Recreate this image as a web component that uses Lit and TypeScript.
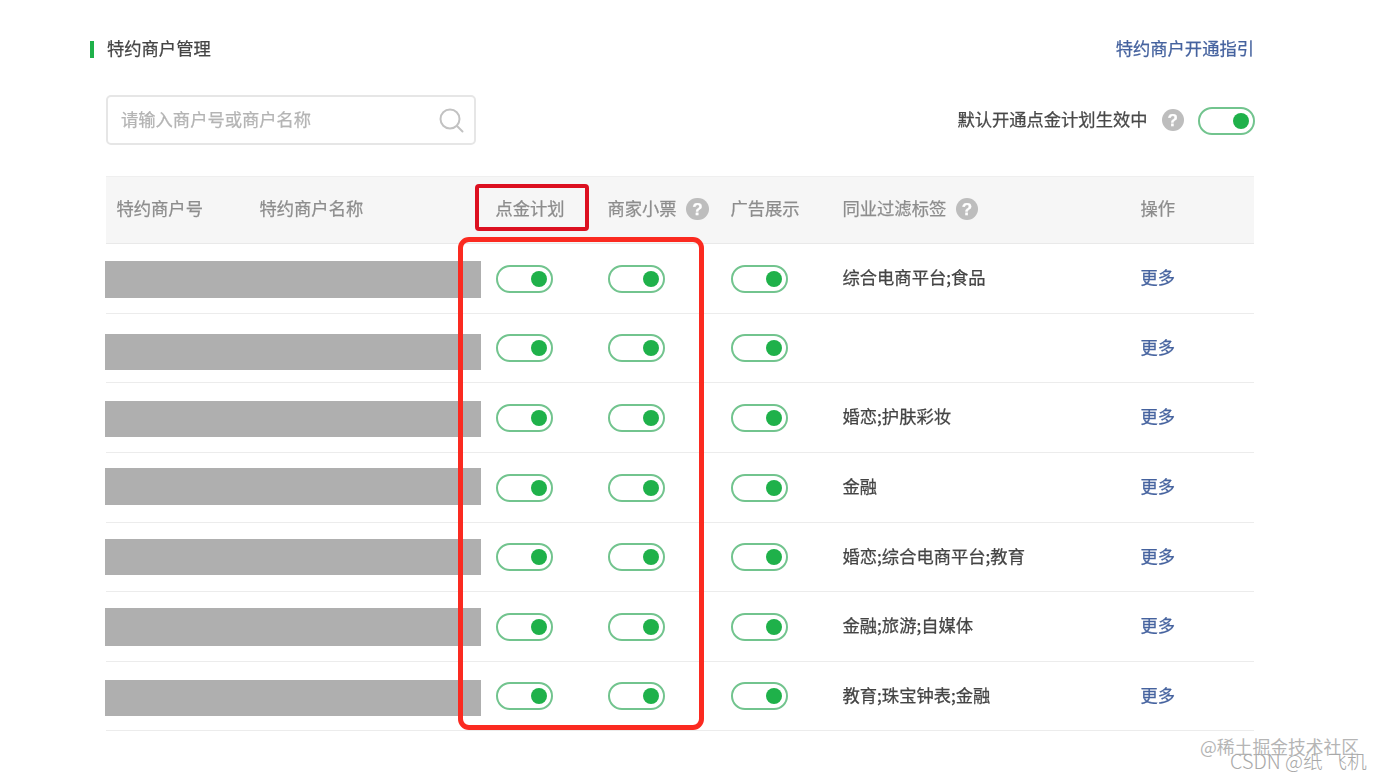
import { LitElement, html, css } from "lit";
import { customElement } from "lit/decorators.js";

const rows = [
  { tags: "综合电商平台;食品", h: 70, bar: [17, 37] },
  { tags: "", h: 69, bar: [20, 36] },
  { tags: "婚恋;护肤彩妆", h: 70, bar: [18, 36] },
  { tags: "金融", h: 70, bar: [15, 37] },
  { tags: "婚恋;综合电商平台;教育", h: 69, bar: [16, 36] },
  { tags: "金融;旅游;自媒体", h: 70, bar: [16, 38] },
  { tags: "教育;珠宝钟表;金融", h: 69, bar: [18, 36] },
];

@customElement("app-root")
export class AppRoot extends LitElement {
  static styles = css`
    :host {
      display: block;
      position: relative;
      width: 1382px;
      height: 780px;
      overflow: hidden;
      background: #fff;
      font-family: "Noto Sans CJK SC", "Noto Sans", sans-serif;
      font-size: 17.3px;
      color: #444;
    }
    .page {
      display: flex;
      flex-direction: column;
      padding: 36px 128px 0 90px;
      filter: blur(0.6px);
      -webkit-text-stroke: 0.25px currentColor;
    }
    .t { display: block; padding-bottom: 4px; }
    .title-row {
      display: flex;
      justify-content: space-between;
      align-items: center;
      height: 26px;
    }
    .title {
      display: flex;
      align-items: center;
      gap: 13px;
      color: #444;
    }
    .mark { width: 4px; height: 17px; background: #1fb14a; }
    a.link { color: #46639f; text-decoration: none; }
    .tools {
      display: flex;
      justify-content: space-between;
      align-items: center;
      margin: 33px 0 0 16px;
      height: 50px;
    }
    .search {
      box-sizing: border-box;
      width: 370px;
      height: 50px;
      border: 2px solid #e6e6e6;
      border-radius: 5px;
      display: flex;
      align-items: center;
      justify-content: space-between;
      padding: 0 10px 0 13px;
      color: #b4b4b4;
    }
    .default { display: flex; align-items: center; margin-right: -1px; }
    .default .label { margin-right: 14px; color: #484848; }
    .default .help { margin-right: 14px; }
    .default .toggle { margin-top: 2px; }
    .help {
      display: inline-flex;
      align-items: center;
      justify-content: center;
      flex: none;
      width: 22.5px;
      height: 22.5px;
      border-radius: 50%;
      background: #bdbdbd;
      color: #fff;
      font-size: 17px;
      font-weight: 700;
      line-height: 1;
      font-family: "Liberation Sans", sans-serif;
    }
    .table { margin: 31px 0 0 16px; }
    .grid {
      display: grid;
      grid-template-columns: 143px 236px 112px 123px 112px 298px 124px;
      align-items: center;
    }
    .head {
      height: 68px;
      background: #f6f6f6;
      border-top: 1px solid #efefef;
      border-bottom: 1px solid #e9e9e9;
      box-sizing: border-box;
      color: #8d8d8d;
    }
    .head .t { padding-bottom: 6px; }
    .head .help { margin-bottom: 2px; }
    .row {
      position: relative;
      box-sizing: border-box;
      border-bottom: 1px solid #ececec;
    }
    .cell { padding-left: 10.5px; display: flex; align-items: center; gap: 9.5px; white-space: nowrap; }
    .row .more { color: #46639f; }
    .toggle {
      box-sizing: border-box;
      position: relative;
      display: block;
      width: 57px;
      height: 28px;
      border: 2px solid #72c48e;
      border-radius: 14px;
      background: #fff;
    }
    .toggle::after {
      content: "";
      position: absolute;
      right: 4px;
      top: 4px;
      width: 16px;
      height: 16px;
      border-radius: 50%;
      background: #1fb14a;
    }
    .bar {
      position: absolute;
      left: -1px;
      width: 376px;
      background: #afafaf;
    }
    .box { position: absolute; box-sizing: border-box; }
    .box-head {
      left: 475px;
      top: 184px;
      width: 114px;
      height: 47px;
      border: 4px solid #dc1020;
      border-radius: 4px;
    }
    .box-body {
      left: 458px;
      top: 237px;
      width: 246px;
      height: 493px;
      border: 5px solid #fb2a20;
      border-radius: 11px;
    }
    .wm { position: absolute; white-space: nowrap; }
    .wm1 { left: 1200px; top: 734px; font-size: 17.8px; color: #b5b5b5; line-height: 24px; }
    .wm2 {
      left: 1230px;
      top: 749px;
      font-size: 19.8px;
      line-height: 24px;
      color: #a8a8a8;
      font-weight: 300;
      font-family: "Noto Sans CJK SC", sans-serif;
    }
  `;

  private toggle() {
    return html`<span class="toggle"></span>`;
  }

  render() {
    return html`
      <div class="page">
        <div class="title-row">
          <div class="title"><span class="mark"></span><span class="t">特约商户管理</span></div>
          <a class="link t">特约商户开通指引</a>
        </div>
        <div class="tools">
          <div class="search">
            <span class="t">请输入商户号或商户名称</span>
            <svg width="26" height="26" viewBox="0 0 26 26" fill="none" stroke="#c2c2c2" stroke-width="2">
              <circle cx="12" cy="12" r="9.5"></circle>
              <path d="M19 19l5.5 5.5" stroke-linecap="round"></path>
            </svg>
          </div>
          <div class="default">
            <span class="label t">默认开通点金计划生效中</span>
            <span class="help">?</span>
            ${this.toggle()}
          </div>
        </div>
        <div class="table">
          <div class="grid head">
            <div class="cell"><span class="t">特约商户号</span></div>
            <div class="cell"><span class="t">特约商户名称</span></div>
            <div class="cell"><span class="t">点金计划</span></div>
            <div class="cell"><span class="t">商家小票</span><span class="help">?</span></div>
            <div class="cell"><span class="t">广告展示</span></div>
            <div class="cell"><span class="t">同业过滤标签</span><span class="help">?</span></div>
            <div class="cell"><span class="t">操作</span></div>
          </div>
          ${rows.map(
            (r) => html`
              <div class="grid row" style="height:${r.h}px">
                <div class="bar" style="top:${r.bar[0]}px;height:${r.bar[1]}px"></div>
                <div class="cell"></div>
                <div class="cell"></div>
                <div class="cell">${this.toggle()}</div>
                <div class="cell">${this.toggle()}</div>
                <div class="cell">${this.toggle()}</div>
                <div class="cell"><span class="t">${r.tags}</span></div>
                <div class="cell more"><span class="t">更多</span></div>
              </div>
            `
          )}
        </div>
      </div>
      <div class="box box-head"></div>
      <div class="box box-body"></div>
      <div class="wm wm1">@稀土掘金技术社区</div>
      <div class="wm wm2">CSDN @纸 飞机</div>
    `;
  }
}
